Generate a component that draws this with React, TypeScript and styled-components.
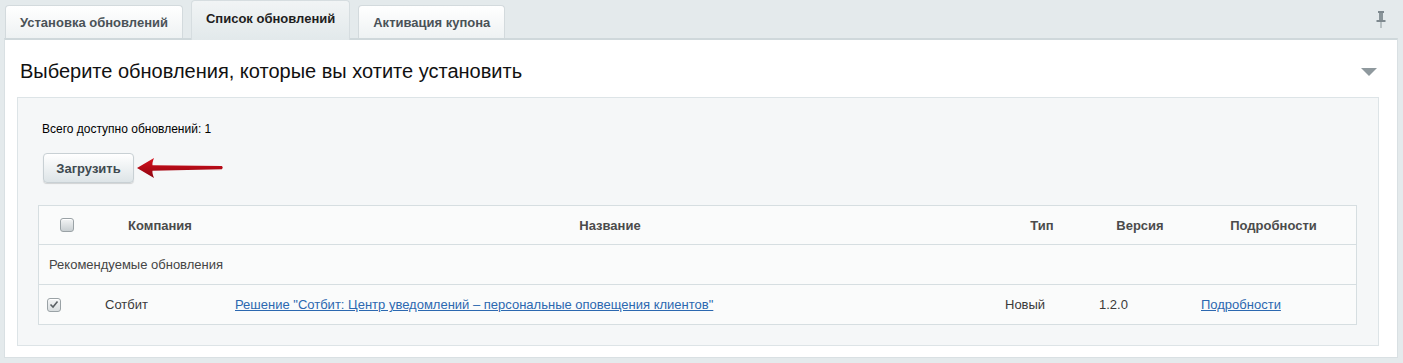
import React from 'react';
import styled, { createGlobalStyle, css } from 'styled-components';

const GlobalStyle = createGlobalStyle`
  html, body {
    margin: 0;
    padding: 0;
    background: #e4eaec;
    font-family: "Liberation Sans", Arial, sans-serif;
  }
`;

const Page = styled.div`
  width: 1403px;
  height: 363px;
  padding: 0 5px 0 4px;
  box-sizing: border-box;
  display: flex;
  flex-direction: column;
`;

const TabBar = styled.div`
  display: flex;
  align-items: flex-end;
  height: 38px;
  padding-left: 1px;
  gap: 8px;
  position: relative;
  z-index: 1;
`;

const Tab = styled.div<{ $active?: boolean }>`
  height: 33px;
  box-sizing: border-box;
  padding: 0 14px;
  display: flex;
  align-items: center;
  font-size: 13px;
  font-weight: 700;
  color: #4a5257;
  background: linear-gradient(#ffffff, #eef2f3);
  border: 1px solid #d3dadd;
  border-bottom: none;
  border-radius: 4px 4px 0 0;

  ${({ $active }) =>
    $active &&
    css`
      height: 40px;
      margin-bottom: -2px;
      padding: 0 14px 4px;
      color: #1e1e1e;
      background: linear-gradient(#f1f4f5, #e2e9eb);
      border-color: #d6dde0;
    `}
`;

const PinSlot = styled.div`
  margin-left: auto;
  align-self: flex-start;
  padding: 11px 12px 0 0;
`;

const Panel = styled.div`
  background: #ffffff;
  border: 1px solid #d9e0e3;
  border-top: 2px solid #cfd8db;
  width: 1394px;
  box-sizing: border-box;
  height: 320px;
`;

const TitleRow = styled.div`
  display: flex;
  align-items: flex-start;
  padding: 20px 20px 14px 15px;
`;

const Title = styled.h2`
  margin: 0;
  font-size: 20px;
  font-weight: 400;
  line-height: 23px;
  color: #111;
  flex: 1;
`;

const Toggle = styled.div`
  margin-top: 8px;
  width: 0;
  height: 0;
  border-left: 8px solid transparent;
  border-right: 8px solid transparent;
  border-top: 8px solid #8f999e;
`;

const Inner = styled.div`
  margin: 0 18px 0 12px;
  background: #f5f7f8;
  border: 1px solid #dde4e7;
  padding: 23px 21px 20px 20px;
`;

const Summary = styled.div`
  font-size: 12px;
  line-height: 16px;
  color: #000;
  padding-left: 4px;
`;

const ActionRow = styled.div`
  display: flex;
  align-items: center;
  margin: 16px 0 0 5px;
`;

const Button = styled.button`
  width: 91px;
  height: 30px;
  font-family: inherit;
  font-size: 13px;
  font-weight: 700;
  color: #3f4a50;
  background: linear-gradient(#ffffff, #dde4e7);
  border: 1px solid #c8d0d4;
  border-radius: 4px;
  box-shadow: 0 1px 1px rgba(0, 0, 0, 0.15);
  padding: 0;
`;

const Table = styled.div`
  margin-top: 22px;
  background: #fafbfb;
  border: 1px solid #d6dee1;
`;

const Row = styled.div<{ $head?: boolean }>`
  display: grid;
  grid-template-columns: 56px 130px 770px 94px 102px 1fr;
  align-items: center;
  height: ${({ $head }) => ($head ? 38 : 39)}px;
  border-bottom: 1px solid #d6dee1;

  &:last-child {
    border-bottom: none;
  }
`;

const HeadCell = styled.div`
  text-align: center;
  font-size: 13px;
  font-weight: 700;
  color: #4b4b4b;
  display: flex;
  justify-content: center;
`;

const Cell = styled.div<{ $pad?: number }>`
  font-size: 13px;
  color: #3a3a3a;
  padding-left: ${({ $pad }) => $pad ?? 10}px;
  display: flex;
`;

const GroupRow = styled.div`
  height: 39px;
  display: flex;
  align-items: center;
  padding-left: 10px;
  font-size: 13px;
  color: #454545;
  border-bottom: 1px solid #d6dee1;
`;

const Link = styled.a`
  color: #2c68b0;
  text-decoration: underline;
  font-size: 13px;
  cursor: pointer;
`;

const Box = styled.span<{ $checked?: boolean }>`
  width: 14px;
  height: 14px;
  box-sizing: border-box;
  border: 1px solid #9aa2a6;
  border-radius: 3px;
  background: ${({ $checked }) =>
    $checked ? 'linear-gradient(#f4f5f6, #d9dee0)' : 'linear-gradient(#f3f4f5, #c9cfd2)'};
  display: flex;
  align-items: center;
  justify-content: center;
  box-shadow: inset 0 1px 0 #fff;
`;

const Pin = () => (
  <svg width="10" height="17" viewBox="0 0 10 17">
    <rect x="2" y="0" width="6" height="2" fill="#7e898f" />
    <rect x="3" y="2" width="4" height="7" fill="#8a959a" />
    <rect x="0.5" y="9" width="9" height="2" fill="#7e898f" />
    <rect x="4.5" y="11" width="1" height="6" fill="#8a959a" />
  </svg>
);

const Arrow = () => (
  <svg width="88" height="24" viewBox="0 0 88 24" style={{ marginLeft: 2 }}>
    <defs>
      <linearGradient id="ar" x1="0" y1="0" x2="0" y2="1">
        <stop offset="0" stopColor="#d6121e" />
        <stop offset="1" stopColor="#8e0410" />
      </linearGradient>
    </defs>
    <path
      d="M1 12 L18 2 Q16 7 16.5 9.3 L86 10 Q87.5 11.5 86 13.2 L16.5 14.7 Q16 17 18 22 Z"
      fill="url(#ar)"
    />
  </svg>
);

const Check = ({ checked }: { checked?: boolean }) => (
  <Box $checked={checked}>
    {checked && (
      <svg width="10" height="9" viewBox="0 0 10 9">
        <path d="M1.5 4.5 L4 7 L8.5 1.5" stroke="#5a6064" strokeWidth="1.6" fill="none" />
      </svg>
    )}
  </Box>
);

const tabs = ['Установка обновлений', 'Список обновлений', 'Активация купона'];

export default function App() {
  return (
    <>
      <GlobalStyle />
      <Page>
        <TabBar>
          {tabs.map((t, i) => (
            <Tab key={t} $active={i === 1}>
              {t}
            </Tab>
          ))}
          <PinSlot>
            <Pin />
          </PinSlot>
        </TabBar>
        <Panel>
          <TitleRow>
            <Title>Выберите обновления, которые вы хотите установить</Title>
            <Toggle />
          </TitleRow>
          <Inner>
            <Summary>Всего доступно обновлений: 1</Summary>
            <ActionRow>
              <Button>Загрузить</Button>
              <Arrow />
            </ActionRow>
            <Table>
              <Row $head>
                <HeadCell>
                  <Check />
                </HeadCell>
                <HeadCell>Компания</HeadCell>
                <HeadCell>Название</HeadCell>
                <HeadCell>Тип</HeadCell>
                <HeadCell>Версия</HeadCell>
                <HeadCell>Подробности</HeadCell>
              </Row>
              <GroupRow>Рекомендуемые обновления</GroupRow>
              <Row>
                <Cell $pad={8}>
                  <Check checked />
                </Cell>
                <Cell>Сотбит</Cell>
                <Cell>
                  <Link>Решение "Сотбит: Центр уведомлений – персональные оповещения клиентов"</Link>
                </Cell>
                <Cell>Новый</Cell>
                <Cell>1.2.0</Cell>
                <Cell>
                  <Link>Подробности</Link>
                </Cell>
              </Row>
            </Table>
          </Inner>
        </Panel>
      </Page>
    </>
  );
}
